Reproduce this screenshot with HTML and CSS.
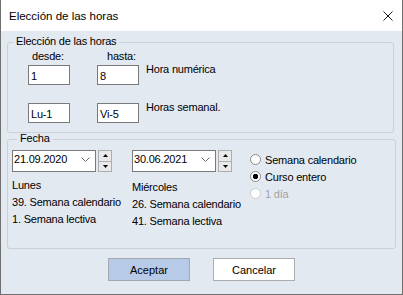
FILE: index.html
```html
<!DOCTYPE html>
<html>
<head>
    <title>Elección de las horas</title>
    <link rel="stylesheet" href="styles.css">
</head>
<body>
    <div class="dialog">
        <div class="titlebar">
            <span class="title">Elección de las horas</span>
            <svg class="close" width="10" height="10" viewBox="0 0 10 10">
                <path d="M0.5 0.5 L9.5 9.5 M9.5 0.5 L0.5 9.5" stroke="#1a1a1a" stroke-width="1" fill="none"/>
            </svg>
        </div>

        <fieldset class="group hours">
            <legend>Elección de las horas</legend>
            <div class="row heads">
                <span class="head from">desde:</span>
                <span class="head to">hasta:</span>
            </div>
            <div class="row fields first">
                <input class="field" type="text" value="1">
                <input class="field" type="text" value="8">
                <span class="note">Hora numérica</span>
            </div>
            <div class="row fields second">
                <input class="field" type="text" value="Lu-1">
                <input class="field" type="text" value="Vi-5">
                <span class="note">Horas semanal.</span>
            </div>
        </fieldset>

        <fieldset class="group dates">
            <legend>Fecha</legend>
            <div class="date-cols">
                <div class="date-col start">
                    <div class="picker">
                        <div class="date-box">
                            <span class="date-value">21.09.2020</span>
                            <svg class="chevron" width="9" height="5" viewBox="0 0 9 5">
                                <path d="M0.5 0.5 L4.5 4.5 L8.5 0.5" stroke="#6a6a6a" stroke-width="1" fill="none"/>
                            </svg>
                        </div>
                        <div class="spin">
                            <span class="spin-btn up"><svg width="5" height="3" viewBox="0 0 5 3"><path d="M2.5 0 L5 3 L0 3 Z" fill="#000"/></svg></span>
                            <span class="spin-btn down"><svg width="5" height="3" viewBox="0 0 5 3"><path d="M0 0 L5 0 L2.5 3 Z" fill="#000"/></svg></span>
                        </div>
                    </div>
                    <div class="info">
                        <div>Lunes</div>
                        <div>39. Semana calendario</div>
                        <div>1. Semana lectiva</div>
                    </div>
                </div>

                <div class="date-col end">
                    <div class="picker">
                        <div class="date-box">
                            <span class="date-value">30.06.2021</span>
                            <svg class="chevron" width="9" height="5" viewBox="0 0 9 5">
                                <path d="M0.5 0.5 L4.5 4.5 L8.5 0.5" stroke="#6a6a6a" stroke-width="1" fill="none"/>
                            </svg>
                        </div>
                        <div class="spin">
                            <span class="spin-btn up"><svg width="5" height="3" viewBox="0 0 5 3"><path d="M2.5 0 L5 3 L0 3 Z" fill="#000"/></svg></span>
                            <span class="spin-btn down"><svg width="5" height="3" viewBox="0 0 5 3"><path d="M0 0 L5 0 L2.5 3 Z" fill="#000"/></svg></span>
                        </div>
                    </div>
                    <div class="info">
                        <div>Miércoles</div>
                        <div>26. Semana calendario</div>
                        <div>41. Semana lectiva</div>
                    </div>
                </div>

                <div class="range">
                    <label class="option"><input type="radio" name="range"> Semana calendario</label>
                    <label class="option"><input type="radio" name="range" checked> Curso entero</label>
                    <label class="option disabled"><input type="radio" name="range" disabled> 1 día</label>
                </div>
            </div>
        </fieldset>

        <div class="actions">
            <button class="btn primary">Aceptar</button>
            <button class="btn">Cancelar</button>
        </div>
    </div>
</body>
</html>
```

FILE: styles.css
```css
body {
    margin: 0;
    font-family: "Liberation Sans", Arial, sans-serif;
    font-size: 11px;
    color: #000;
}

.dialog {
    width: 403px;
    height: 295px;
    box-sizing: border-box;
    border: 1px solid #707070;
    border-top: none;
    background-color: #e3e9f1;
    display: flex;
    flex-direction: column;
    letter-spacing: -0.2px;
}

.titlebar {
    height: 31px;
    flex: none;
    background-color: #fff;
    display: flex;
    align-items: center;
    justify-content: space-between;
    padding: 0 9px 0 8px;
}

.title {
    font-size: 11.5px;
    letter-spacing: 0;
}

/* group boxes */
.group {
    margin: 0;
    padding: 0;
    min-width: 0;
    border: 1px solid #cbd0d7;
    border-radius: 3px;
}

.group legend {
    margin-left: 5px;
    padding: 0 3px 2px;
    line-height: 9px;
}

.hours {
    margin: 6px 8px 0 6px;
    padding: 2px 0 9px 0;
}

.row {
    display: flex;
    padding-left: 20px;
}

.heads {
    line-height: 13px;
}

.head {
    width: 42px;
    box-sizing: border-box;
}

.head.from {
    padding-left: 4px;
}

.head.to {
    margin-left: 27px;
    padding-left: 10px;
}

.fields.first {
    margin-top: 2px;
}

.fields.second {
    margin-top: 18px;
}

.field {
    width: 42px;
    height: 20px;
    box-sizing: border-box;
    margin: 0;
    padding: 1px 2px 0;
    border: 1px solid #7a7a7a;
    background-color: #fff;
    font: inherit;
    color: #000;
    letter-spacing: -0.2px;
}

.field + .field {
    margin-left: 27px;
}

.note {
    margin: -2px 0 0 7px;
    line-height: 13px;
    align-self: flex-start;
}

/* date part */
.dates {
    margin: 1px 6px 0 6px;
    padding: 5px 0 18px 4px;
}

.date-cols {
    display: flex;
}

.date-col.start {
    width: 120px;
}

.date-col.end {
    width: 118px;
}

.picker {
    display: flex;
    gap: 2px;
    height: 22px;
}

.date-box {
    width: 84px;
    box-sizing: border-box;
    border: 1px solid #7a7a7a;
    background-color: #fff;
    display: flex;
    align-items: center;
    justify-content: space-between;
    padding: 0 5px 3px 1px;
    line-height: 13px;
}

.spin {
    width: 14px;
    box-sizing: border-box;
    border: 1px solid #adadad;
    background-color: #e9e9e9;
    display: flex;
    flex-direction: column;
}

.spin-btn {
    flex: 1;
    display: flex;
    align-items: center;
    justify-content: center;
}

.spin-btn.up {
    border-bottom: 1px solid #adadad;
}

.info {
    margin-top: 5px;
    line-height: 17px;
}

.date-col.end .info {
    margin-top: 7px;
}

.range {
    display: flex;
    flex-direction: column;
    margin-top: 1px;
}

.option {
    display: flex;
    align-items: center;
    gap: 4px;
    height: 17px;
}

.option input {
    appearance: none;
    width: 11px;
    height: 11px;
    margin: 0;
    border: 1px solid #8c8c8c;
    border-radius: 50%;
    background-color: #fff;
}

.option input:checked {
    background: radial-gradient(circle, #000 0 2.4px, #fff 3px);
}

.option.disabled {
    color: #a3a3a3;
}

.option.disabled input {
    border-color: #cacaca;
}

/* buttons */
.actions {
    display: flex;
    justify-content: center;
    gap: 23px;
    margin-top: 9px;
}

.btn {
    width: 82px;
    height: 23px;
    box-sizing: border-box;
    padding: 0;
    border: 1px solid #adadad;
    background-color: #fff;
    font: inherit;
    color: #000;
}

.btn.primary {
    background-color: #b7cbe9;
    border-color: #a4a8ae;
}
```
